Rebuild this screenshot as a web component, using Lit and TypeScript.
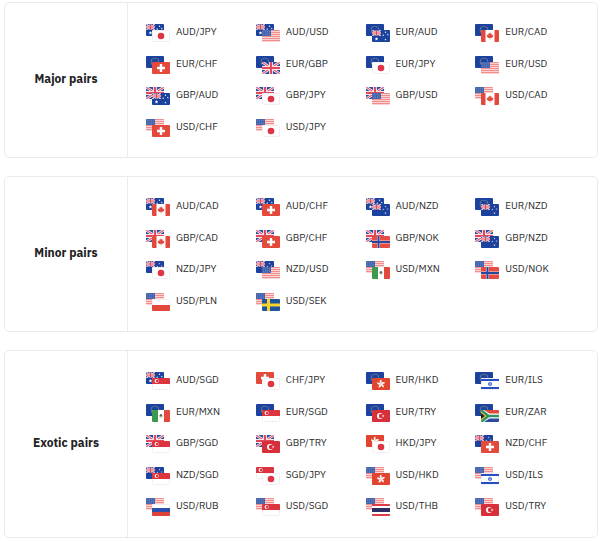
import { LitElement, html, svg, css, type SVGTemplateResult } from "lit";
import { customElement, property } from "lit/decorators.js";

const NAVY = "#1a429e";

const star = (cx: number, cy: number, r: number, fill: string) => {
  const points = Array.from({ length: 10 }, (_, i) => {
    const radius = i % 2 ? r * 0.45 : r;
    const a = (Math.PI * i) / 5 - Math.PI / 2;
    return `${(cx + radius * Math.cos(a)).toFixed(2)},${(cy + radius * Math.sin(a)).toFixed(2)}`;
  }).join(" ");
  return svg`<polygon points=${points} fill=${fill}></polygon>`;
};

const stripes = (colors: string[], sizes: number[]) => {
  let y = 0;
  return colors.map((c, i) => {
    const bar = svg`<rect y=${y} width="18" height=${sizes[i]} fill=${c}></rect>`;
    y += sizes[i];
    return bar;
  });
};

const union = svg`
  <rect width="18" height="12" fill="#2a50a2"></rect>
  <path d="M0 0L18 12M18 0L0 12" stroke="#fff" stroke-width="2.6"></path>
  <path d="M0 0L18 12M18 0L0 12" stroke="#e2566c" stroke-width="1.1"></path>
  <path d="M9 0V12M0 6H18" stroke="#fbe3e6" stroke-width="3.8"></path>
  <path d="M9 0V12M0 6H18" stroke="#e0485c" stroke-width="2"></path>`;

const canton = svg`<svg width="9" height="6" viewBox="0 0 18 12">${union}</svg>`;

const nordic = (field: string, outer: string, inner: string) => svg`
  <rect width="18" height="12" fill=${field}></rect>
  <path d="M6.5 0V12M0 6H18" stroke=${outer} stroke-width="3"></path>
  <path d="M6.5 0V12M0 6H18" stroke=${inner} stroke-width="2"></path>`;

const crescent = (cx: number, cy: number, r: number, field: string) => svg`
  <circle cx=${cx} cy=${cy} r=${r} fill="#fff"></circle>
  <circle cx=${cx + r * 0.35} cy=${cy} r=${r * 0.75} fill=${field}></circle>`;

const outline = svg`<rect x="0.5" y="0.5" width="17" height="11" rx="1" fill="none" stroke="#f0eef3"></rect>`;

const FLAGS: Record<string, SVGTemplateResult> = {
  AUD: svg`<rect width="18" height="12" fill=${NAVY}></rect>${canton}
    ${star(4.5, 9, 1.9, "#fff")}${star(13.5, 2.2, 1, "#fff")}${star(11.2, 5.2, 1, "#fff")}
    ${star(15.8, 4.6, 1, "#fff")}${star(13.5, 9.6, 1.1, "#fff")}`,
  NZD: svg`<rect width="18" height="12" fill=${NAVY}></rect>${canton}
    ${star(13.5, 2.6, 1, "#e9c3d6")}${star(11.4, 5.4, 1, "#e9c3d6")}
    ${star(15.6, 5, 1, "#e9c3d6")}${star(13.5, 9.2, 1.2, "#e9c3d6")}`,
  EUR: svg`<rect width="18" height="12" fill=${NAVY}></rect>
    ${Array.from({ length: 12 }, (_, i) =>
      star(9 + 3.8 * Math.cos((i * Math.PI) / 6), 6 + 3.8 * Math.sin((i * Math.PI) / 6), 0.8, "#c4bf84"))}`,
  GBP: union,
  USD: svg`<rect width="18" height="12" fill="#fbd3d3"></rect>
    ${[0, 2, 4, 6, 8, 10].map((y) => svg`<rect y=${y} width="18" height="1" fill="#f08e8e"></rect>`)}
    <rect width="9" height="6" fill="#4565ae"></rect>
    ${[1.2, 3, 4.8].map((y) => [1.3, 3.4, 5.6, 7.7].map((x) => svg`<circle cx=${x} cy=${y} r="0.35" fill="#a9b8dd"></circle>`))}`,
  JPY: svg`<rect width="18" height="12" fill="#fff"></rect>${outline}
    <circle cx="9" cy="6" r="3.3" fill="#dc3545"></circle>`,
  CHF: svg`<rect width="18" height="12" fill="#e44a3c"></rect>
    <path d="M9 2V10M5 6H13" stroke="#fff" stroke-width="2.4"></path>`,
  CAD: svg`<rect width="18" height="12" fill="#fff"></rect>
    <path d="M0 0H4.5V12H0ZM13.5 0H18V12H13.5Z" fill="#e2483b"></path>
    <path d="M9 2.2L9.9 3.8L10.8 3.4L10.6 5.2L12.3 4.6L12 5.9L12.4 6.3L10.6 7.9L9.3 7.8V9.6H8.7V7.8L7.4 7.9L5.6 6.3L6 5.9L5.7 4.6L7.4 5.2L7.2 3.4L8.1 3.8Z" fill="#e2483b"></path>`,
  NOK: nordic("#e64c43", "#f3dce4", "#26489c"),
  SEK: nordic("#1d559c", "#f6d32e", "#f6d32e"),
  MXN: svg`<rect width="18" height="12" fill="#fff"></rect>
    <rect width="6" height="12" fill="#3c9a4e"></rect><rect x="12" width="6" height="12" fill="#e2483b"></rect>
    <path d="M7.4 5.6A1.7 1.7 0 0 0 10.6 6.2" fill="none" stroke="#7fa36b" stroke-width="0.8"></path>
    <circle cx="9" cy="5.2" r="1.2" fill="#7a5e48"></circle>`,
  PLN: svg`<rect width="18" height="12" fill="#fff"></rect>${outline}<rect y="6" width="18" height="6" fill="#e2483b"></rect>`,
  SGD: svg`<rect width="18" height="12" fill="#fff"></rect>${outline}<rect width="18" height="6" fill="#dc3540"></rect>
    ${crescent(4.6, 3, 2, "#dc3540")}
    <circle cx="6.6" cy="2.2" r="0.4" fill="#fff"></circle><circle cx="6.6" cy="3.8" r="0.4" fill="#fff"></circle>`,
  HKD: svg`<rect width="18" height="12" fill="#e2452f"></rect>
    ${[0, 72, 144, 216, 288].map((a) => svg`<path transform=${`rotate(${a} 9 6)`} d="M9 6C7 4.6 7.4 2.4 9.4 1.6C9 2.8 10.4 3.8 9 6Z" fill="#fff"></path>`)}`,
  TRY: svg`<rect width="18" height="12" fill="#d8303a"></rect>
    ${crescent(8, 6, 3, "#d8303a")}${star(11.2, 6, 1.3, "#fff")}`,
  ILS: svg`<rect width="18" height="12" fill="#fff"></rect>${outline}
    <path d="M0 1H18V3H0ZM0 9H18V11H0Z" fill="#2450c4"></path>
    <path d="M9 3.9L10.8 7H7.2ZM9 8.1L7.2 5H10.8Z" fill="none" stroke="#2450c4" stroke-width="0.6"></path>`,
  ZAR: svg`<rect width="18" height="12" fill="#fff"></rect>
    <path d="M3 0H18V3.6H8.4Z" fill="#e2483b"></path><path d="M3 12H18V8.4H8.4Z" fill="#2b4aa0"></path>
    <path d="M0 0H2L8 4.8H18V7.2H8L2 12H0Z" fill="#2f9562"></path>
    <path d="M0 1.6L5.4 6L0 10.4Z" fill="#f1c33b"></path><path d="M0 2.9L3.8 6L0 9.1Z" fill="#222"></path>`,
  RUB: svg`${stripes(["#fff", "#2a4fae", "#e0403a"], [4, 4, 4])}<path d="M0.5 4V0.5H17.5V4" fill="none" stroke="#f0eef3"></path>`,
  THB: svg`${stripes(["#dc3b48", "#fff", "#2c2f66", "#fff", "#dc3b48"], [2, 2, 4, 2, 2])}`,
};

const GROUPS = [
  {
    title: "Major pairs",
    pairs: `AUD/JPY AUD/USD EUR/AUD EUR/CAD EUR/CHF EUR/GBP EUR/JPY EUR/USD
      GBP/AUD GBP/JPY GBP/USD USD/CAD USD/CHF USD/JPY`,
  },
  {
    title: "Minor pairs",
    pairs: `AUD/CAD AUD/CHF AUD/NZD EUR/NZD GBP/CAD GBP/CHF GBP/NOK GBP/NZD
      NZD/JPY NZD/USD USD/MXN USD/NOK USD/PLN USD/SEK`,
  },
  {
    title: "Exotic pairs",
    pairs: `AUD/SGD CHF/JPY EUR/HKD EUR/ILS EUR/MXN EUR/SGD EUR/TRY EUR/ZAR
      GBP/SGD GBP/TRY HKD/JPY NZD/CHF NZD/SGD SGD/JPY USD/HKD USD/ILS
      USD/RUB USD/SGD USD/THB USD/TRY`,
  },
];

@customElement("currency-pair")
export class CurrencyPair extends LitElement {
  @property() pair = "";

  static styles = css`
    :host {
      display: flex;
      gap: 6px;
      height: 18px;
    }
    .flags {
      display: grid;
      flex: none;
      grid-template: repeat(3, 6px) / 6px 12px 6px;
    }
    .flag {
      width: 18px;
      height: 12px;
      border-radius: 1px;
      overflow: hidden;
    }
    .base {
      grid-area: 1 / 1 / 3 / 3;
    }
    .quote {
      grid-area: 2 / 2 / 4 / 4;
    }
    .name {
      line-height: 15px;
      white-space: nowrap;
    }
  `;

  render() {
    const [base, quote] = this.pair.split("/");
    return html`
      <span class="flags" aria-hidden="true">
        <svg class="flag base" viewBox="0 0 18 12">${FLAGS[base]}</svg>
        <svg class="flag quote" viewBox="0 0 18 12">${FLAGS[quote]}</svg>
      </span>
      <span class="name">${this.pair}</span>
    `;
  }
}

@customElement("app-root")
export class AppRoot extends LitElement {
  static styles = css`
    :host {
      display: flex;
      flex-direction: column;
      gap: 18px;
      padding: 2px 5px 4px 4px;
      background: #fff;
      color: #2b2b2b;
      font: 10px "IBM Plex Sans", Roboto, sans-serif;
    }
    .group {
      display: grid;
      grid-template-columns: 123px 1fr;
      border: 1px solid #ebebeb;
      border-radius: 5px;
    }
    .title {
      display: flex;
      align-items: center;
      justify-content: center;
      margin: 0;
      padding-bottom: 3px;
      border-right: 1px solid #ebebeb;
      color: #222;
      font-size: 12px;
      font-weight: 700;
    }
    .pairs {
      display: grid;
      grid-template-columns: repeat(4, 1fr);
      grid-auto-rows: 32px 31px;
      margin: 0;
      padding: 21px 12px 7px 18px;
      list-style: none;
    }
  `;

  render() {
    return GROUPS.map(
      ({ title, pairs }) => html`
        <section class="group">
          <h2 class="title">${title}</h2>
          <ul class="pairs">
            ${pairs.split(/\s+/).map((p) => html`<li><currency-pair .pair=${p}></currency-pair></li>`)}
          </ul>
        </section>
      `
    );
  }
}
